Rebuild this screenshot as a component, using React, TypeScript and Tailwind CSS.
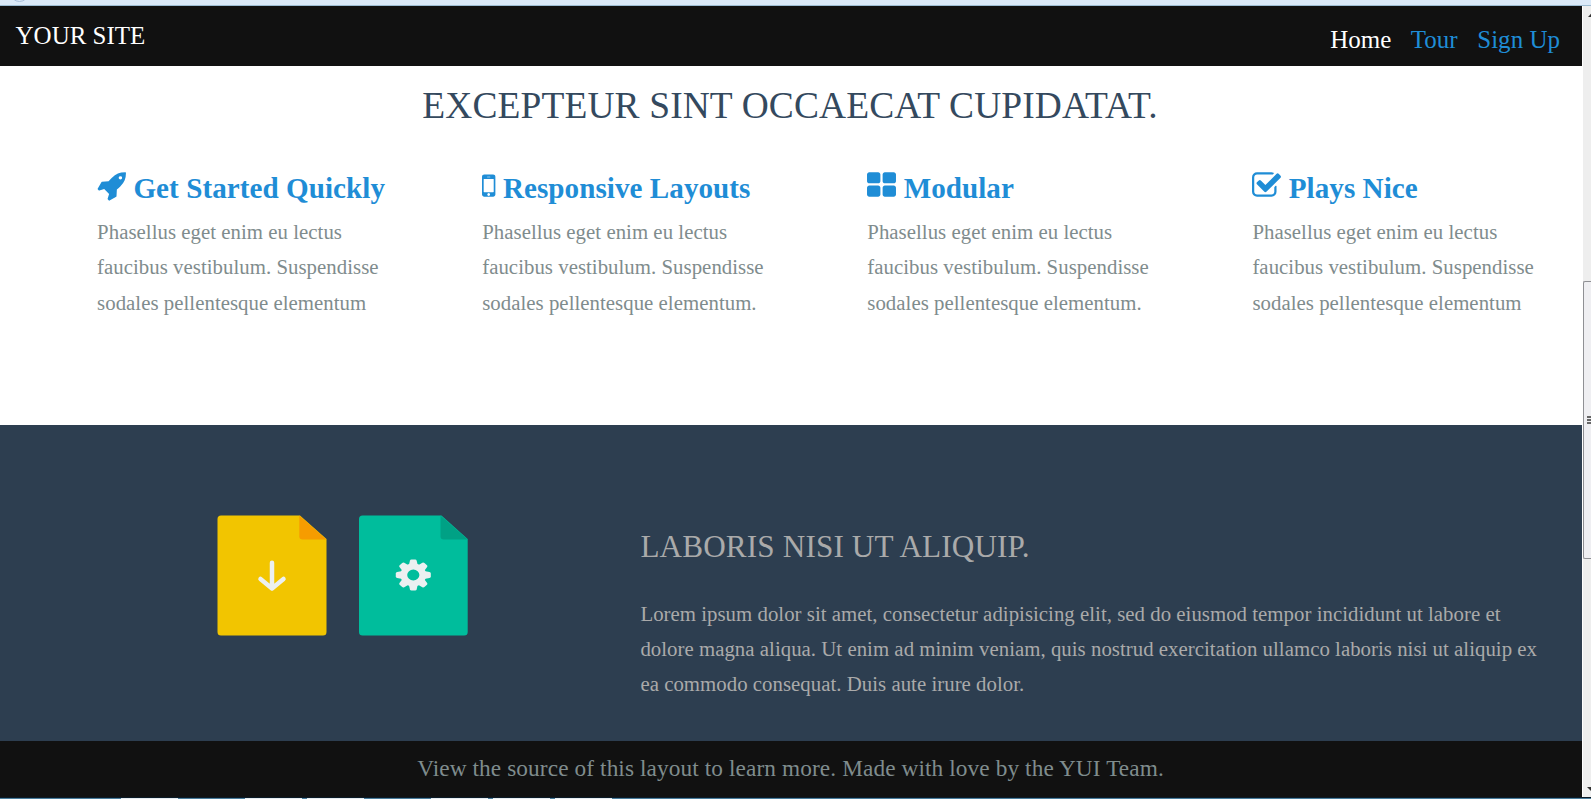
import React from "react";

type IconProps = { width: number; viewBox: string; d: string };

function Icon({ width, viewBox, d }: IconProps) {
  return (
    <svg width={width} height={31.2} viewBox={viewBox} fill="currentColor" className="inline-block align-[-3.6px]">
      <path d={d} />
    </svg>
  );
}

const features: { title: string; last: string; icon: IconProps }[] = [
  {
    title: "Get Started Quickly",
    last: "sodales pellentesque elementum",
    icon: {
      width: 29,
      viewBox: "0 0 1664 1792",
      d: "M1440 448q0-40-28-68t-68-28-68 28-28 68 28 68 68 28 68-28 28-68zm224-288q0 249-75.5 430.5t-253.5 360.5q-81 80-195 176l-20 379q-2 16-16 26l-384 224q-7 4-16 4-12 0-23-9l-64-64q-13-14-8-32l85-276-281-281-276 85q-3 1-9 1-14 0-23-9l-64-64q-17-19-5-39l224-384q10-14 26-16l379-20q96-114 176-195 188-187 358-258t431-71q14 0 24 9.5t10 22.5z",
    },
  },
  {
    title: "Responsive Layouts",
    last: "sodales pellentesque elementum.",
    icon: {
      width: 13.4,
      viewBox: "512 0 768 1792",
      d: "M976 1408q0-33-23.5-56.5t-56.5-23.5-56.5 23.5-23.5 56.5 23.5 56.5 56.5 23.5 56.5-23.5 23.5-56.5zm208-160v-704q0-13-9.5-22.5t-22.5-9.5h-512q-13 0-22.5 9.5t-9.5 22.5v704q0 13 9.5 22.5t22.5 9.5h512q13 0 22.5-9.5t9.5-22.5zm-192-848q0-16-16-16h-160q-16 0-16 16t16 16h160q16 0 16-16zm288-16v1024q0 52-38 90t-90 38h-512q-52 0-90-38t-38-90v-1024q0-52 38-90t90-38h512q52 0 90 38t38 90z",
    },
  },
  {
    title: "Modular",
    last: "sodales pellentesque elementum.",
    icon: {
      width: 29,
      viewBox: "64 0 1664 1792",
      d: "M832 1024v384q0 52-38 90t-90 38h-512q-52 0-90-38t-38-90v-384q0-52 38-90t90-38h512q52 0 90 38t38 90zm0-768v384q0 52-38 90t-90 38h-512q-52 0-90-38t-38-90v-384q0-52 38-90t90-38h512q52 0 90 38t38 90zm896 768v384q0 52-38 90t-90 38h-512q-52 0-90-38t-38-90v-384q0-52 38-90t90-38h512q52 0 90 38t38 90zm0-768v384q0 52-38 90t-90 38h-512q-52 0-90-38t-38-90v-384q0-52 38-90t90-38h512q52 0 90 38t38 90z",
    },
  },
  {
    title: "Plays Nice",
    last: "sodales pellentesque elementum",
    icon: {
      width: 29,
      viewBox: "64 0 1664 1792",
      d: "M1472 930v318q0 119-84.5 203.5t-203.5 84.5h-832q-119 0-203.5-84.5t-84.5-203.5v-832q0-119 84.5-203.5t203.5-84.5h832q63 0 117 25 15 7 18 23 3 17-9 29l-49 49q-10 10-23 10-3 0-9-2-23-6-45-6h-832q-66 0-113 47t-47 113v832q0 66 47 113t113 47h832q66 0 113-47t47-113v-254q0-13 9-22l64-64q10-10 23-10 6 0 12 3 20 8 20 29zm231-489l-814 814q-24 24-57 24t-57-24l-430-430q-24-24-24-57t24-57l110-110q24-24 57-24t57 24l263 263 647-647q24-24 57-24t57 24l110 110q24 24 24 57t-24 57z",
    },
  },
];

// Widths of the alternating light pieces of the taskbar edge.
const taskbar = [
  ["w-[121px]", "bg-[#4a7d9c]"],
  ["w-[57px]", "bg-[#e6edf1]"],
  ["w-[67px]", "bg-[#4a7d9c]"],
  ["w-[57px]", "bg-[#e6edf1]"],
  ["w-[5px]", "bg-[#4a7d9c]"],
  ["w-[57px]", "bg-[#e6edf1]"],
  ["w-[67px]", "bg-[#4a7d9c]"],
  ["w-[57px]", "bg-[#e6edf1]"],
  ["w-[5px]", "bg-[#4a7d9c]"],
  ["w-[57px]", "bg-[#e6edf1]"],
  ["w-[5px]", "bg-[#4a7d9c]"],
  ["w-[57px]", "bg-[#e6edf1]"],
];

function FileIcons() {
  return (
    <svg width="290" height="150" viewBox="0 0 290 150">
      <path d="M21 15.5H100L126.5 39V132a3.5 3.5 0 0 1-3.5 3.5H21a3.5 3.5 0 0 1-3.5-3.5V19a3.5 3.5 0 0 1 3.5-3.5z" fill="#f2c500" />
      <path d="M99.3 15.5L126.5 39.5H102.5a3.2 3.2 0 0 1-3.2-3.2z" fill="#f69c00" />
      <path d="M72 62.8V87M60.5 79L72 88.5L83.5 79" fill="none" stroke="#ecf0f1" strokeWidth="4.5" strokeLinecap="round" strokeLinejoin="round" />
      <path d="M162.5 15.5H241.5L267.7 39V132a3.5 3.5 0 0 1-3.5 3.5H162.5a3.5 3.5 0 0 1-3.5-3.5V19a3.5 3.5 0 0 1 3.5-3.5z" fill="#00bd9c" />
      <path d="M240.5 15.5L267.7 39.5H243.7a3.2 3.2 0 0 1-3.2-3.2z" fill="#00a185" />
      <g transform="translate(213.3 75) scale(1.13 1)" fill="#ecf0f1">
        <circle r="8.4" fill="none" stroke="#ecf0f1" strokeWidth="6" />
        {[0, 45, 90, 135, 180, 225, 270, 315].map((a) => (
          <path key={a} d="M-4 -9.5L-3 -14.3Q-2.7 -15.5 -1.6 -15.5H1.6Q2.7 -15.5 3 -14.3L4 -9.5z" transform={`rotate(${a})`} />
        ))}
      </g>
    </svg>
  );
}

export default function App() {
  return (
    <div className="flex h-[799px] w-[1591px] flex-col overflow-hidden bg-white font-['Liberation_Serif',serif] text-[20.8px] leading-[35.36px] text-[#7f8c8d]">
      <div className="h-[6px] shrink-0 overflow-hidden border-b border-[#9dbcd3] bg-[#dbe9f8]">
        <div className="-mt-[17px] ml-[10px] size-[19px] rounded-full border border-[#a9bfdc]" />
      </div>
      <div className="flex h-[791px] shrink-0">
        <div className="flex w-[1582px] shrink-0 flex-col">
          <header className="flex h-[60px] shrink-0 justify-between bg-[#111] pl-[15.6px] pr-[22px] text-[24.96px] text-white">
            <div className="pt-[12px]">YOUR SITE</div>
            <nav className="flex gap-[19.5px] pt-[16px] tracking-[0.04px] text-[#1f8dd6]">
              <a className="text-white">Home</a>
              <a>Tour</a>
              <a>Sign Up</a>
            </nav>
          </header>
          <main className="h-[359px] shrink-0 bg-white">
            <h2 className="pt-[21px] pr-[2px] text-center text-[37.44px] leading-[37px] tracking-[0.13px] whitespace-nowrap text-[#34495e]">EXCEPTEUR SINT OCCAECAT CUPIDATAT.</h2>
            <div className="grid grid-cols-4 pt-[44px] pl-[41.6px]">
              {features.map((f) => (
                <div key={f.title} className="pl-[55.5px] whitespace-nowrap">
                  <h3 className="h-[46px] text-[29.12px] font-bold leading-[40px] tracking-[0.05px] text-[#1f8dd6]">
                    <Icon {...f.icon} /> {f.title}
                  </h3>
                  <p className="tracking-[0.04px]">
                    Phasellus eget enim eu lectus
                    <br />
                    faucibus vestibulum. Suspendisse
                    <br />
                    {f.last}
                  </p>
                </div>
              ))}
            </div>
          </main>
          <section className="flex h-[316px] shrink-0 bg-[#2d3e50] text-[#aaa]">
            <div className="w-[640.4px] shrink-0 pt-[75px] pl-[200px]">
              <FileIcons />
            </div>
            <div className="pt-[104px] whitespace-nowrap">
              <h2 className="h-[66.6px] text-[31.2px] leading-[35px] tracking-[0.14px]">LABORIS NISI UT ALIQUIP.</h2>
              <p className="tracking-[0.035px]">
                Lorem ipsum dolor sit amet, consectetur adipisicing elit, sed do eiusmod tempor incididunt ut labore et
                <br />
                dolore magna aliqua. Ut enim ad minim veniam, quis nostrud exercitation ullamco laboris nisi ut aliquip ex
                <br />
                ea commodo consequat. Duis aute irure dolor.
              </p>
            </div>
          </section>
          <footer className="h-[56px] shrink-0 bg-[#111] pt-[10px] pr-[1px] text-center text-[23.3px] tracking-[0.1px]">
            View the source of this layout to learn more. Made with love by the YUI Team.
          </footer>
        </div>
        <div className="flex w-[9px] shrink-0 flex-col border-l border-white bg-[#eee]">
          <svg width="8" height="275" className="shrink-0">
            <path d="M5 11L9 6.5V11z" fill="#333" />
          </svg>
          <div className="flex h-[278px] shrink-0 items-center justify-end rounded-l-[2px] border border-r-0 border-[#8f9094] bg-[#efeff2]">
            <div className="flex w-[4px] flex-col gap-px">
              <div className="h-[2px] bg-[#666]" />
              <div className="h-[2px] bg-[#666]" />
              <div className="h-[2px] bg-[#666]" />
            </div>
          </div>
          <svg width="8" height="238" className="shrink-0">
            <path d="M4 228H8V232z" fill="#333" />
          </svg>
        </div>
      </div>
      <div className="h-px shrink-0 bg-[#0b1a26]" />
      <div className="flex h-px shrink-0 bg-[#4a7d9c]">
        {taskbar.map(([w, c], i) => (
          <div key={i} className={`${w} ${c} shrink-0`} />
        ))}
      </div>
    </div>
  );
}
